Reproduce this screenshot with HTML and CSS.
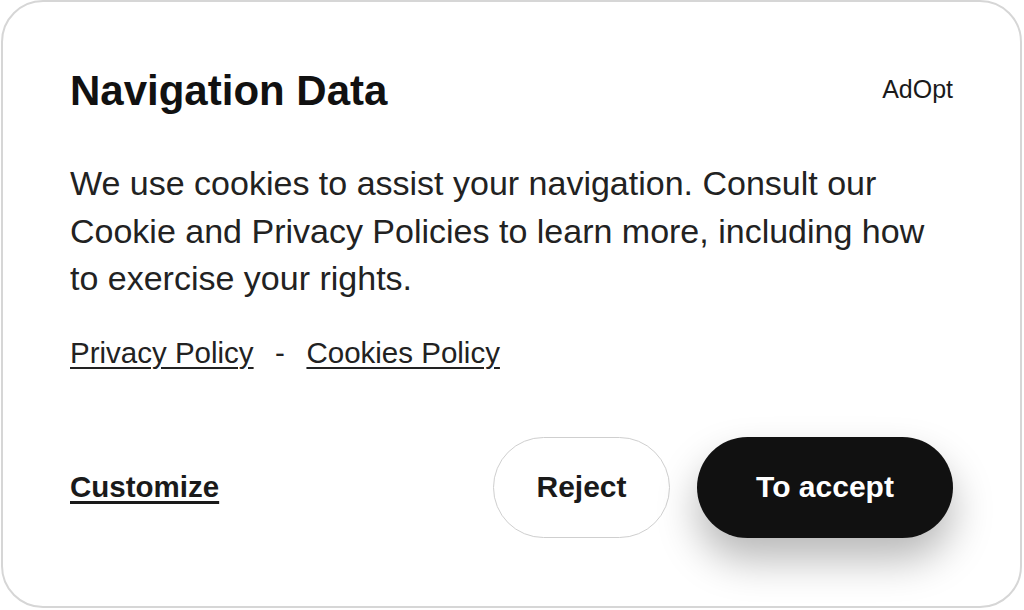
FILE: index.html
```html
<!DOCTYPE html>
<html lang="en">
<head>
<meta charset="utf-8">
<title>Navigation Data</title>
<link rel="stylesheet" href="styles.css">
</head>
<body>
<div class="card">
  <div class="header">
    <h1 class="title">Navigation Data</h1>
    <span class="brand">AdOpt</span>
  </div>
  <p class="text">We use cookies to assist your navigation. Consult our Cookie and Privacy Policies to learn more, including how to exercise your rights.</p>
  <div class="links">
    <a class="link" href="#">Privacy Policy</a>
    <span class="sep">-</span>
    <a class="link" href="#">Cookies Policy</a>
  </div>
  <div class="actions">
    <a class="customize" href="#">Customize</a>
    <div class="buttons">
      <button class="btn btn-reject">Reject</button>
      <button class="btn btn-accept">To accept</button>
    </div>
  </div>
</div>
</body>
</html>
```
FILE: styles.css
```css
html, body {
  margin: 0;
  padding: 0;
  background: #ffffff;
}
body {
  font-family: "Liberation Sans", Arial, sans-serif;
  color: #1c1c1c;
}
.card {
  box-sizing: border-box;
  width: 1021px;
  height: 608px;
  margin-left: 1px;
  border: 2px solid #d6d6d6;
  border-radius: 42px;
  padding: 65px 67px 0 67px;
  background: #fff;
}
.header {
  display: flex;
  justify-content: space-between;
  align-items: flex-start;
}
.title {
  margin: 0;
  font-size: 42px;
  line-height: 48px;
  font-weight: 700;
  color: #111;
}
.brand {
  margin-top: 7px;
  font-size: 25px;
  line-height: 30px;
  color: #1a1a1a;
}
.text {
  margin: 45px 0 0 0;
  max-width: 870px;
  font-size: 34px;
  line-height: 47.5px;
  color: #222;
}
.links {
  margin-top: 32px;
  display: flex;
  align-items: center;
  font-size: 29.5px;
  line-height: 36px;
}
.link {
  color: #222;
  text-decoration: underline;
  text-decoration-thickness: 2px;
  text-underline-offset: 4px;
}
.sep {
  margin: 0 21.5px;
  color: #222;
}
.actions {
  margin-top: 66px;
  display: flex;
  justify-content: space-between;
  align-items: center;
}
.customize {
  font-size: 29.5px;
  font-weight: 700;
  color: #1a1a1a;
  text-decoration: underline;
  text-decoration-thickness: 3px;
  text-underline-offset: 4px;
}
.buttons {
  display: flex;
  gap: 27px;
}
.btn {
  height: 101px;
  border-radius: 51px;
  font-family: "Liberation Sans", Arial, sans-serif;
  font-size: 30px;
  font-weight: 700;
  cursor: pointer;
}
.btn-reject {
  width: 177px;
  background: #fff;
  color: #1a1a1a;
  border: 1.5px solid #cfcfcf;
}
.btn-accept {
  width: 256px;
  background: #111;
  color: #fff;
  border: none;
  box-shadow: 0 22px 40px rgba(0, 0, 0, 0.28);
}
```
